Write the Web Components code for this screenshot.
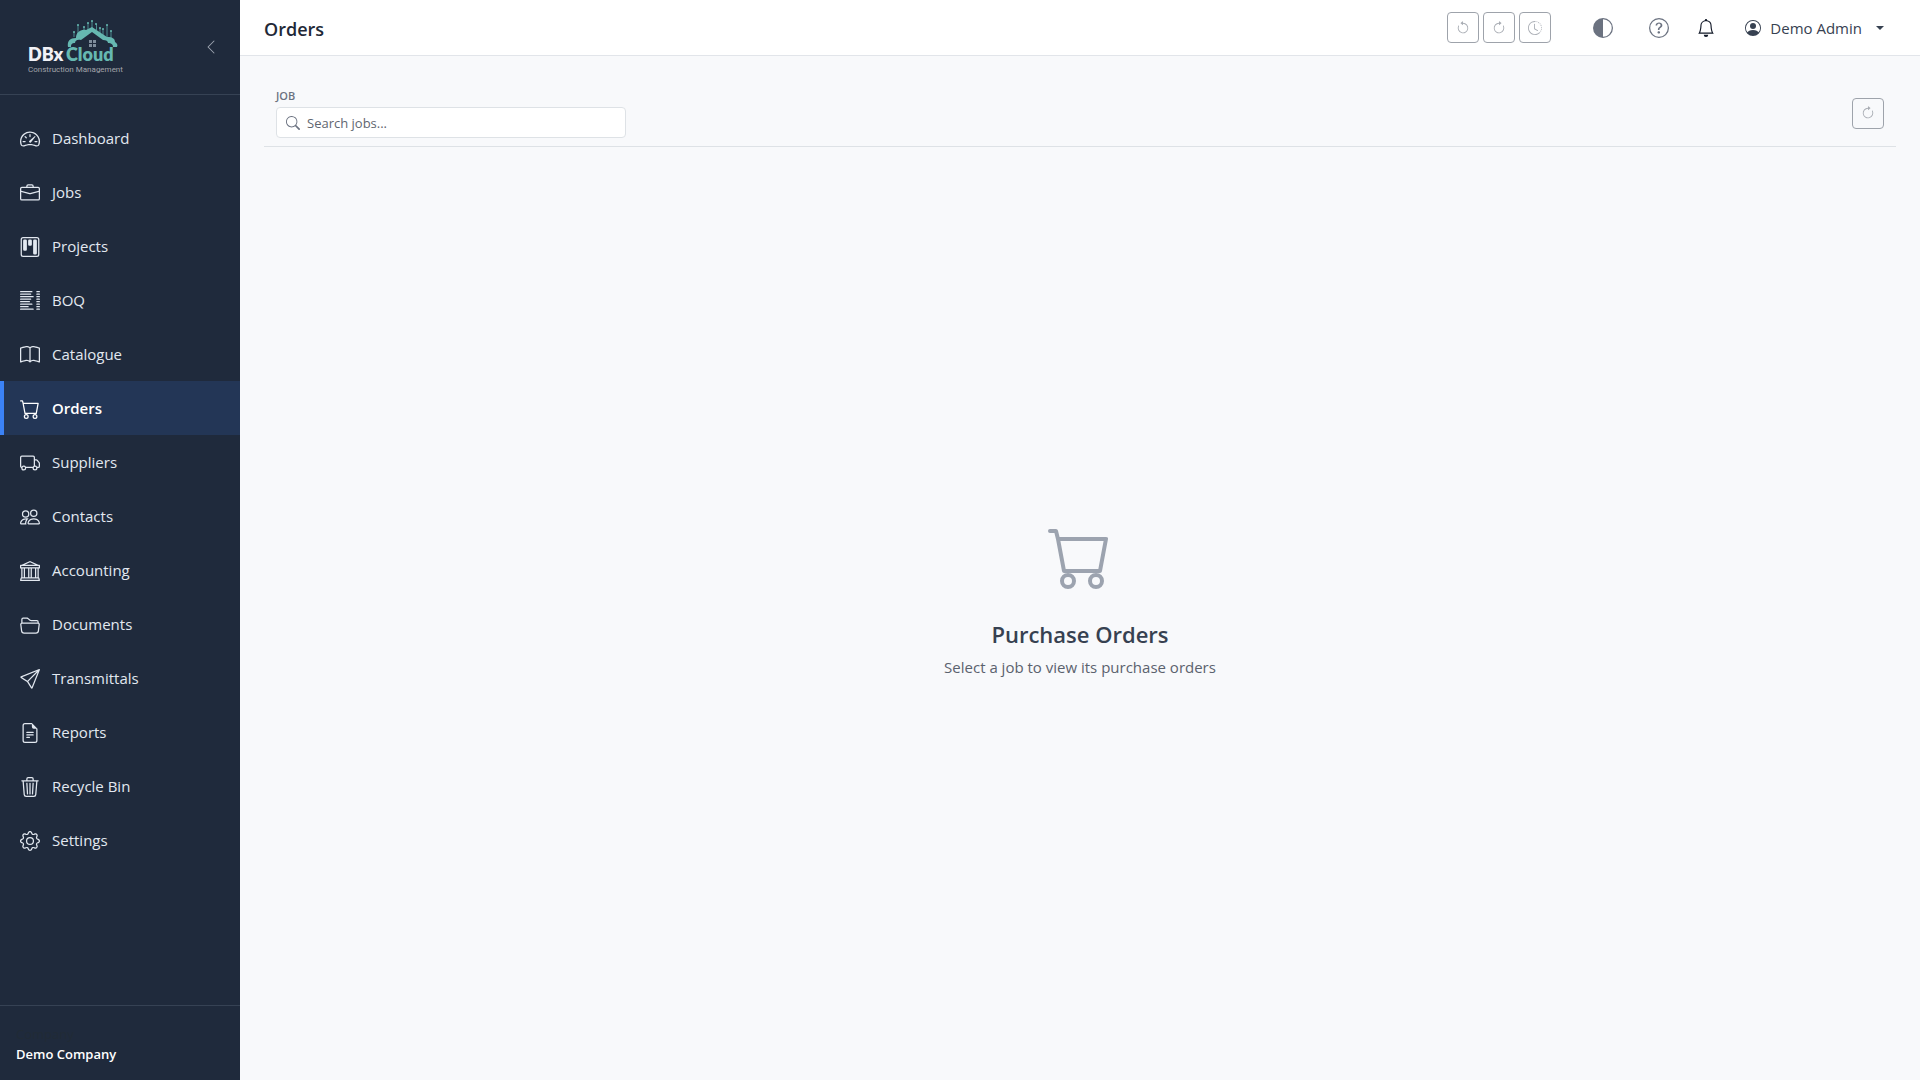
<!DOCTYPE html>
<html lang="en">
<head>
<meta charset="utf-8">
<title>Orders</title>
<style>
  :root {
    --sidebar: #1f2a3c;
    --sidebar-line: #364254;
    --accent: #3b82f6;
    --page: #f8f9fb;
    --line: #dee2e6;
    --muted: #6b7280;
    --text: #374151;
  }
  body {
    margin: 0;
    font: 15px/24px "Open Sans", "Noto Sans", sans-serif;
    color: var(--text);
    background: var(--page);
  }
</style>
</head>
<body>
<app-shell>
  <side-bar slot="sidebar" company="Demo Company">
    <nav-item icon="speedometer">Dashboard</nav-item>
    <nav-item icon="briefcase">Jobs</nav-item>
    <nav-item icon="kanban">Projects</nav-item>
    <nav-item icon="columns">BOQ</nav-item>
    <nav-item icon="book">Catalogue</nav-item>
    <nav-item icon="cart" active>Orders</nav-item>
    <nav-item icon="truck">Suppliers</nav-item>
    <nav-item icon="people">Contacts</nav-item>
    <nav-item icon="bank">Accounting</nav-item>
    <nav-item icon="folder">Documents</nav-item>
    <nav-item icon="send">Transmittals</nav-item>
    <nav-item icon="file">Reports</nav-item>
    <nav-item icon="trash">Recycle Bin</nav-item>
    <nav-item icon="gear">Settings</nav-item>
  </side-bar>
  <top-bar slot="header" user="Demo Admin">Orders</top-bar>
  <job-filter></job-filter>
  <empty-state icon="cart">
    <span slot="title">Purchase Orders</span>
    Select a job to view its purchase orders
  </empty-state>
</app-shell>

<script>
const icons = {
  speedometer: `<path d="M8 4a.5.5 0 0 1 .5.5V6a.5.5 0 0 1-1 0V4.5A.5.5 0 0 1 8 4M3.732 5.732a.5.5 0 0 1 .707 0l.915.914a.5.5 0 1 1-.708.708l-.914-.915a.5.5 0 0 1 0-.707M2 10a.5.5 0 0 1 .5-.5h1.586a.5.5 0 0 1 0 1H2.5A.5.5 0 0 1 2 10m9.5 0a.5.5 0 0 1 .5-.5h1.5a.5.5 0 0 1 0 1H12a.5.5 0 0 1-.5-.5m.754-4.246a.39.39 0 0 0-.527-.02L7.547 9.31a.91.91 0 1 0 1.302 1.258l3.434-4.297a.39.39 0 0 0-.029-.518z"/><path fill-rule="evenodd" d="M0 10a8 8 0 1 1 15.547 2.661c-.442 1.253-1.845 1.602-2.932 1.25C11.309 13.488 9.475 13 8 13c-1.474 0-3.31.488-4.615.911-1.087.352-2.49.003-2.932-1.25A8 8 0 0 1 0 10m8-7a7 7 0 0 0-6.603 9.329c.203.575.923.876 1.68.63C4.397 12.533 6.358 12 8 12s3.604.532 4.923.96c.757.245 1.477-.056 1.68-.631A7 7 0 0 0 8 3"/>`,
  briefcase: `<path d="M6.5 1A1.5 1.5 0 0 0 5 2.5V3H1.5A1.5 1.5 0 0 0 0 4.5v8A1.5 1.5 0 0 0 1.5 14h13a1.5 1.5 0 0 0 1.5-1.5v-8A1.5 1.5 0 0 0 14.5 3H11v-.5A1.5 1.5 0 0 0 9.5 1zm0 1h3a.5.5 0 0 1 .5.5V3H6v-.5a.5.5 0 0 1 .5-.5m1.886 6.914L15 7.151V12.5a.5.5 0 0 1-.5.5h-13a.5.5 0 0 1-.5-.5V7.15l6.614 1.764a1.5 1.5 0 0 0 .772 0M1.5 4h13a.5.5 0 0 1 .5.5v1.616L8.129 7.948a.5.5 0 0 1-.258 0L1 6.116V4.5a.5.5 0 0 1 .5-.5"/>`,
  kanban: `<path d="M13.5 1a1 1 0 0 1 1 1v12a1 1 0 0 1-1 1h-11a1 1 0 0 1-1-1V2a1 1 0 0 1 1-1zm-11-1a2 2 0 0 0-2 2v12a2 2 0 0 0 2 2h11a2 2 0 0 0 2-2V2a2 2 0 0 0-2-2z"/><path d="M6.5 3a1 1 0 0 1 1-1h1a1 1 0 0 1 1 1v3a1 1 0 0 1-1 1h-1a1 1 0 0 1-1-1zm-4 0a1 1 0 0 1 1-1h1a1 1 0 0 1 1 1v7a1 1 0 0 1-1 1h-1a1 1 0 0 1-1-1zm8 0a1 1 0 0 1 1-1h1a1 1 0 0 1 1 1v10a1 1 0 0 1-1 1h-1a1 1 0 0 1-1-1z"/>`,
  columns: `<path fill="none" stroke="currentColor" stroke-linecap="round" d="M.5.5h9M.5 2.5h8M.5 4.5h10M.5 6.5h8M.5 8.5h7M.5 10.5h9M.5 12.5h6M.5 14.5h10M13.5.5h2M13.5 2.5h2M13.5 4.5h2M13.5 6.5h2M13.5 8.5h2M13.5 10.5h2M13.5 12.5h2M13.5 14.5h2"/>`,
  book: `<path d="M1 2.828c.885-.37 2.154-.769 3.388-.893 1.33-.134 2.458.063 3.112.752v9.746c-.935-.53-2.12-.603-3.213-.493-1.18.12-2.37.461-3.287.811zm7.5-.141c.654-.689 1.782-.886 3.112-.752 1.234.124 2.503.523 3.388.893v9.923c-.918-.35-2.107-.692-3.287-.81-1.094-.111-2.278-.039-3.213.492zM8 1.783C7.015.936 5.587.81 4.287.94c-1.514.153-3.042.672-3.994 1.105A.5.5 0 0 0 0 2.5v11a.5.5 0 0 0 .707.455c.882-.4 2.303-.881 3.68-1.02 1.409-.142 2.59.087 3.223.877a.5.5 0 0 0 .78 0c.633-.79 1.814-1.019 3.222-.877 1.378.139 2.8.62 3.681 1.02A.5.5 0 0 0 16 13.5v-11a.5.5 0 0 0-.293-.455c-.952-.433-2.48-.952-3.994-1.105C10.413.809 8.985.936 8 1.783"/>`,
  cart: `<path d="M0 1.5A.5.5 0 0 1 .5 1H2a.5.5 0 0 1 .485.379L2.89 3H14.5a.5.5 0 0 1 .491.592l-1.5 8A.5.5 0 0 1 13 12H4a.5.5 0 0 1-.491-.408L2.01 3.607 1.61 2H.5a.5.5 0 0 1-.5-.5M3.102 4l1.313 7h8.17l1.313-7zM5 12a2 2 0 1 0 0 4 2 2 0 0 0 0-4m7 0a2 2 0 1 0 0 4 2 2 0 0 0 0-4m-7 1a1 1 0 1 1 0 2 1 1 0 0 1 0-2m7 0a1 1 0 1 1 0 2 1 1 0 0 1 0-2"/>`,
  truck: `<path d="M0 3.5A1.5 1.5 0 0 1 1.5 2h9A1.5 1.5 0 0 1 12 3.5V5h1.02a1.5 1.5 0 0 1 1.17.563l1.481 1.85a1.5 1.5 0 0 1 .329.938V10.5a1.5 1.5 0 0 1-1.5 1.5H14a2 2 0 1 1-4 0H5a2 2 0 1 1-3.998-.085A1.5 1.5 0 0 1 0 10.5zm1.294 7.456A2 2 0 0 1 4.732 11h5.536a2 2 0 0 1 .732-.732V3.5a.5.5 0 0 0-.5-.5h-9a.5.5 0 0 0-.5.5v7a.5.5 0 0 0 .294.456M12 10a2 2 0 0 1 1.732 1h.768a.5.5 0 0 0 .5-.5V8.35a.5.5 0 0 0-.11-.312l-1.48-1.85A.5.5 0 0 0 13.02 6H12zm-9 1a1 1 0 1 0 0 2 1 1 0 0 0 0-2m9 0a1 1 0 1 0 0 2 1 1 0 0 0 0-2"/>`,
  people: `<path d="M15 14s1 0 1-1-1-4-5-4-5 3-5 4 1 1 1 1zm-7.978-1L7 12.996c.001-.264.167-1.03.76-1.72C8.312 10.629 9.282 10 11 10c1.717 0 2.687.63 3.24 1.276.593.69.758 1.457.76 1.72l-.008.002-.014.002zM11 7a2 2 0 1 0 0-4 2 2 0 0 0 0 4m3-2a3 3 0 1 1-6 0 3 3 0 0 1 6 0M6.936 9.28a6 6 0 0 0-1.23-.247A7 7 0 0 0 5 9c-4 0-5 3-5 4q0 1 1 1h4.216A2.24 2.24 0 0 1 5 13c0-1.01.377-2.042 1.09-2.904.243-.294.526-.569.846-.816M4.92 10A5.5 5.5 0 0 0 4 13H1c0-.26.164-1.03.76-1.724.545-.636 1.492-1.256 3.16-1.275ZM1.5 5.5a3 3 0 1 1 6 0 3 3 0 0 1-6 0m3-2a2 2 0 1 0 0 4 2 2 0 0 0 0-4"/>`,
  bank: `<path d="m8 0 6.61 3h.89a.5.5 0 0 1 .5.5v2a.5.5 0 0 1-.5.5H15v7a.5.5 0 0 1 .485.38l.5 2a.498.498 0 0 1-.485.62H.5a.498.498 0 0 1-.485-.62l.5-2A.5.5 0 0 1 1 13V6H.5a.5.5 0 0 1-.5-.5v-2A.5.5 0 0 1 .5 3h.89zM3.777 3h8.447L8 1zM2 6v7h1V6zm2 0v7h2.5V6zm3.5 0v7h1V6zm2 0v7H12V6zM13 6v7h1V6zm2-1V4H1v1zm-.39 9H1.39l-.25 1h13.72z"/>`,
  folder: `<path d="M1 3.5A1.5 1.5 0 0 1 2.5 2h2.764c.958 0 1.76.56 2.311 1.184C7.985 3.648 8.48 4 9 4h4.5A1.5 1.5 0 0 1 15 5.5v.64c.57.265.94.876.856 1.546l-.64 5.124A2.5 2.5 0 0 1 12.733 15H3.266a2.5 2.5 0 0 1-2.481-2.19l-.64-5.124A1.5 1.5 0 0 1 1 6.14zM2 6h12v-.5a.5.5 0 0 0-.5-.5H9c-.964 0-1.71-.629-2.174-1.154C6.374 3.334 5.82 3 5.264 3H2.5a.5.5 0 0 0-.5.5zm-.367 1a.5.5 0 0 0-.496.562l.64 5.124A1.5 1.5 0 0 0 3.266 14h9.468a1.5 1.5 0 0 0 1.489-1.314l.64-5.124A.5.5 0 0 0 14.367 7z"/>`,
  send: `<path d="M15.854.146a.5.5 0 0 1 .11.54l-5.819 14.547a.75.75 0 0 1-1.329.124l-3.178-4.995L.643 7.184a.75.75 0 0 1 .124-1.33L15.314.037a.5.5 0 0 1 .54.11ZM6.636 10.07l2.761 4.338L14.13 2.576zm6.787-8.201L1.591 6.602l4.339 2.76z"/>`,
  file: `<path d="M5.5 7a.5.5 0 0 0 0 1h5a.5.5 0 0 0 0-1zM5 9.5a.5.5 0 0 1 .5-.5h5a.5.5 0 0 1 0 1h-5a.5.5 0 0 1-.5-.5m0 2a.5.5 0 0 1 .5-.5h2a.5.5 0 0 1 0 1h-2a.5.5 0 0 1-.5-.5"/><path d="M9.5 0H4a2 2 0 0 0-2 2v12a2 2 0 0 0 2 2h8a2 2 0 0 0 2-2V4.5zm0 1v2A1.5 1.5 0 0 0 11 4.5h2V14a1 1 0 0 1-1 1H4a1 1 0 0 1-1-1V2a1 1 0 0 1 1-1z"/>`,
  trash: `<path d="M6.5 1h3a.5.5 0 0 1 .5.5v1H6v-1a.5.5 0 0 1 .5-.5M11 2.5v-1A1.5 1.5 0 0 0 9.5 0h-3A1.5 1.5 0 0 0 5 1.5v1H1.5a.5.5 0 0 0 0 1h.538l.853 10.66A2 2 0 0 0 4.885 16h6.23a2 2 0 0 0 1.994-1.84l.853-10.66h.538a.5.5 0 0 0 0-1zm1.958 1-.846 10.58a1 1 0 0 1-.997.92h-6.23a1 1 0 0 1-.997-.92L3.042 3.5zm-7.487 1a.5.5 0 0 1 .528.47l.5 8.5a.5.5 0 0 1-.998.06L5 5.03a.5.5 0 0 1 .47-.53Zm5.058 0a.5.5 0 0 1 .47.53l-.5 8.5a.5.5 0 1 1-.998-.06l.5-8.5a.5.5 0 0 1 .528-.47M8 4.5a.5.5 0 0 1 .5.5v8.5a.5.5 0 0 1-1 0V5a.5.5 0 0 1 .5-.5"/>`,
  gear: `<path d="M8 4.754a3.246 3.246 0 1 0 0 6.492 3.246 3.246 0 0 0 0-6.492M5.754 8a2.246 2.246 0 1 1 4.492 0 2.246 2.246 0 0 1-4.492 0"/><path d="M9.796 1.343c-.527-1.79-3.065-1.79-3.592 0l-.094.319a.873.873 0 0 1-1.255.52l-.292-.16c-1.64-.892-3.433.902-2.54 2.541l.159.292a.873.873 0 0 1-.52 1.255l-.319.094c-1.79.527-1.79 3.065 0 3.592l.319.094a.873.873 0 0 1 .52 1.255l-.16.292c-.892 1.64.901 3.434 2.541 2.54l.292-.159a.873.873 0 0 1 1.255.52l.094.319c.527 1.79 3.065 1.79 3.592 0l.094-.319a.873.873 0 0 1 1.255-.52l.292.16c1.64.893 3.434-.902 2.54-2.541l-.159-.292a.873.873 0 0 1 .52-1.255l.319-.094c1.79-.527 1.79-3.065 0-3.592l-.319-.094a.873.873 0 0 1-.52-1.255l.16-.292c.893-1.64-.902-3.433-2.541-2.54l-.292.159a.873.873 0 0 1-1.255-.52zm-2.633.283c.246-.835 1.428-.835 1.674 0l.094.319a1.873 1.873 0 0 0 2.693 1.115l.291-.16c.764-.415 1.6.42 1.184 1.185l-.159.292a1.873 1.873 0 0 0 1.116 2.692l.318.094c.835.246.835 1.428 0 1.674l-.319.094a1.873 1.873 0 0 0-1.115 2.693l.16.291c.415.764-.42 1.6-1.185 1.184l-.291-.159a1.873 1.873 0 0 0-2.693 1.116l-.094.318c-.246.835-1.428.835-1.674 0l-.094-.319a1.873 1.873 0 0 0-2.692-1.115l-.292.16c-.764.415-1.6-.42-1.184-1.185l.159-.291A1.873 1.873 0 0 0 1.945 8.93l-.319-.094c-.835-.246-.835-1.428 0-1.674l.319-.094A1.873 1.873 0 0 0 3.06 4.377l-.16-.292c-.415-.764.42-1.6 1.185-1.184l.292.159a1.873 1.873 0 0 0 2.692-1.115z"/>`,
  undo: `<path fill-rule="evenodd" d="M8 3a5 5 0 1 1-4.546 2.914.5.5 0 0 0-.908-.417A6 6 0 1 0 8 2z"/><path d="M8 4.466V.534a.25.25 0 0 0-.41-.192L5.23 2.308a.25.25 0 0 0 0 .384l2.36 1.966A.25.25 0 0 0 8 4.466"/>`,
  redo: `<path fill-rule="evenodd" d="M8 3a5 5 0 1 0 4.546 2.914.5.5 0 0 1 .908-.417A6 6 0 1 1 8 2z"/><path d="M8 4.466V.534a.25.25 0 0 1 .41-.192l2.36 1.966c.12.1.12.284 0 .384L8.41 4.658A.25.25 0 0 1 8 4.466"/>`,
  history: `<path d="M8.515 1.019A7 7 0 0 0 8 1V0a8 8 0 0 1 .589.022zm2.004.45a7 7 0 0 0-.985-.299l.219-.976q.576.129 1.126.342zm1.37.71a7 7 0 0 0-.439-.27l.493-.87a8 8 0 0 1 .979.654l-.615.789a7 7 0 0 0-.418-.302zm1.834 1.79a7 7 0 0 0-.653-.796l.724-.69q.406.429.747.91zm.744 1.352a7 7 0 0 0-.214-.468l.893-.45a8 8 0 0 1 .45 1.088l-.95.313a7 7 0 0 0-.179-.483m.53 2.507a7 7 0 0 0-.1-1.025l.985-.17q.1.58.116 1.17zm-.131 1.538q.05-.254.081-.51l.993.123a8 8 0 0 1-.23 1.155l-.964-.267q.069-.247.12-.501m-.952 2.379q.276-.436.486-.908l.914.405q-.24.54-.555 1.038zm-.964 1.205q.183-.183.35-.378l.758.653a8 8 0 0 1-.401.432z"/><path d="M8 1a7 7 0 1 0 4.95 11.95l.707.707A8.001 8.001 0 1 1 8 0z"/><path d="M7.5 3a.5.5 0 0 1 .5.5v5.21l3.248 1.856a.5.5 0 0 1-.496.868l-3.5-2A.5.5 0 0 1 7 9V3.5a.5.5 0 0 1 .5-.5"/>`,
  half: `<path d="M8 15A7 7 0 1 0 8 1zm0 1A8 8 0 1 1 8 0a8 8 0 0 1 0 16"/>`,
  question: `<path d="M8 15A7 7 0 1 1 8 1a7 7 0 0 1 0 14m0 1A8 8 0 1 0 8 0a8 8 0 0 0 0 16"/><path d="M5.255 5.786a.237.237 0 0 0 .241.247h.825c.138 0 .248-.113.266-.25.09-.656.54-1.134 1.342-1.134.686 0 1.314.343 1.314 1.168 0 .635-.374.927-.965 1.371-.673.489-1.206 1.06-1.168 1.987l.003.217a.25.25 0 0 0 .25.246h.811a.25.25 0 0 0 .25-.25v-.105c0-.718.273-.927 1.01-1.486.609-.463 1.244-.977 1.244-2.056 0-1.511-1.276-2.241-2.673-2.241-1.267 0-2.655.59-2.75 2.286m1.557 5.763c0 .533.425.927 1.01.927.609 0 1.028-.394 1.028-.927 0-.552-.42-.94-1.029-.94-.584 0-1.009.388-1.009.94"/>`,
  bell: `<path d="M8 16a2 2 0 0 0 2-2H6a2 2 0 0 0 2 2M8 1.918l-.797.161A4 4 0 0 0 4 6c0 .628-.134 2.197-.459 3.742-.16.767-.376 1.566-.663 2.258h10.244c-.287-.692-.502-1.49-.663-2.258C12.134 8.197 12 6.628 12 6a4 4 0 0 0-3.203-3.92zM14.22 12c.223.447.481.801.78 1H1c.299-.199.557-.553.78-1C2.68 10.2 3 6.88 3 6c0-2.42 1.72-4.44 4.005-4.901a1 1 0 1 1 1.99 0A5 5 0 0 1 13 6c0 .88.32 4.2 1.22 6"/>`,
  person: `<path d="M11 6a3 3 0 1 1-6 0 3 3 0 0 1 6 0"/><path fill-rule="evenodd" d="M0 8a8 8 0 1 1 16 0A8 8 0 0 1 0 8m8-7a7 7 0 0 0-5.468 11.37C3.242 11.226 4.805 10 8 10s4.757 1.225 5.468 2.37A7 7 0 0 0 8 1"/>`,
  search: `<path d="M11.742 10.344a6.5 6.5 0 1 0-1.397 1.398h-.001q.044.06.098.115l3.85 3.85a1 1 0 0 0 1.415-1.414l-3.85-3.85a1 1 0 0 0-.115-.1zM12 6.5a5.5 5.5 0 1 1-11 0 5.5 5.5 0 0 1 11 0"/>`,
  chevron: `<path fill-rule="evenodd" d="M11.354 1.646a.5.5 0 0 1 0 .708L5.707 8l5.647 5.646a.5.5 0 0 1-.708.708l-6-6a.5.5 0 0 1 0-.708l6-6a.5.5 0 0 1 .708 0"/>`,
};

// fills a new open shadow root from a template
function render(el, html) {
  const template = document.createElement("template");
  template.innerHTML = html;
  el.attachShadow({ mode: "open" });
  el.shadowRoot.appendChild(template.content.cloneNode(true));
}

class BiIcon extends HTMLElement {
  connectedCallback() {
    if (this.shadowRoot) return;
    render(this, `
      <style>
        :host { display: inline-flex; flex: none; width: var(--icon, 16px); height: var(--icon, 16px); }
        svg { width: 100%; height: 100%; overflow: visible; }
      </style>
      <svg viewBox="0 0 16 16" fill="currentColor" aria-hidden="true">${icons[this.getAttribute("name")]}</svg>
    `);
  }
}
customElements.define("bi-icon", BiIcon);

class AppShell extends HTMLElement {
  constructor() {
    super();
    render(this, `
      <style>
        :host { display: grid; grid-template-columns: 240px 1fr; min-height: 100vh; }
        .content { display: flex; flex-direction: column; min-width: 0; }
        main { flex: 1; display: flex; flex-direction: column; padding: 24px; }
      </style>
      <slot name="sidebar"></slot>
      <div class="content">
        <slot name="header"></slot>
        <main><slot></slot></main>
      </div>
    `);
  }
}
customElements.define("app-shell", AppShell);

class BrandLogo extends HTMLElement {
  constructor() {
    super();
    render(this, `
      <style>
        :host { display: block; width: 120px; height: 62px; }
        text { font-family: Lato, sans-serif; }
        .name { font-size: 18px; font-weight: 800; }
        .tag { font: 8px Roboto, sans-serif; fill: #a3a5ab; }
      </style>
      <svg width="120" height="62" viewBox="16 16 120 62" role="img" aria-label="DBx Cloud">
        <g stroke="#4d8c90" fill="none">
          <path d="M74 37v-5M78 34v-9M84 33v-6M88 30v-7M92 29v-8M96.500 30v-6M100 33v-5M103 35v-6M107 37V25M111 38v-7"/>
        </g>
        <g fill="#66b8b1">
          <circle cx="74" cy="32" r="1"/><circle cx="78" cy="25" r="1"/><circle cx="84" cy="27" r="1"/>
          <circle cx="88" cy="23" r="1"/><circle cx="92" cy="21" r="1"/><circle cx="96" cy="24" r="1"/>
          <circle cx="100" cy="28" r="1"/><circle cx="103" cy="29" r="1"/><circle cx="107" cy="25" r="1"/>
          <circle cx="111" cy="31" r="1"/>
          <path d="M68 47c-1-6 2-9 8-9 0-5 4-9 10-8l6-3 15 10c6 0 8 2 8 5 2 1 3 3 2 5h-4c0-3-2-4-5-4 0-2-2-3-5-3l-11-8-11 8c-4-1-6 1-6 3-3 0-4 1-4 4z"/>
        </g>
        <path fill="#7f8c9b" d="M89 40h3v3h-3zM93 40h3v3h-3zM89 44h3v3h-3zM93 44h3v3h-3z"/>
        <text class="name" x="28" y="61" fill="#f1f1f6">DBx</text>
        <text class="name" x="66" y="61" fill="#66b8b1">Cloud</text>
        <text class="tag" x="28" y="72">Construction Management</text>
      </svg>
    `);
  }
}
customElements.define("brand-logo", BrandLogo);

class SideBar extends HTMLElement {
  constructor() {
    super();
    render(this, `
      <style>
        :host { display: flex; flex-direction: column; background: var(--sidebar); color: #e2e8f0; }
        header { display: flex; align-items: center; justify-content: space-between; padding: 16px; border-bottom: 1px solid var(--sidebar-line); }
        button { display: flex; padding: 5px; border: 0; background: none; color: #9ca3af; }
        nav { flex: 1; padding: 16px 0; }
        footer { padding: 16px; border-top: 1px solid var(--sidebar-line); font-size: 13px; line-height: 20px; }
        small { display: block; font-size: 13px; padding-top: 2px; color: #212b36; }
        strong { display: block; font-weight: 600; color: #fff; }
      </style>
      <header>
        <brand-logo></brand-logo>
        <button aria-label="Collapse sidebar"><bi-icon name="chevron"></bi-icon></button>
      </header>
      <nav><slot></slot></nav>
      <footer><small>Company</small><strong>${this.getAttribute("company")}</strong></footer>
    `);
  }
}
customElements.define("side-bar", SideBar);

class NavItem extends HTMLElement {
  constructor() {
    super();
    render(this, `
      <style>
        :host { display: block; }
        a { --icon: 20px; display: flex; align-items: center; gap: 12px; padding: 15px 16px; border-left: 4px solid transparent; color: inherit; text-decoration: none; }
        bi-icon { margin-top: 2px; }
        :host([active]) a { color: #fff; font-weight: 600; background: #233656; border-color: var(--accent); }
      </style>
      <a href="#"><bi-icon name="${this.getAttribute("icon")}"></bi-icon><slot></slot></a>
    `);
  }
}
customElements.define("nav-item", NavItem);

class ToolButton extends HTMLElement {
  constructor() {
    super();
    render(this, `
      <style>
        :host { display: block; }
        button { --icon: 14px; display: flex; align-items: center; justify-content: center; width: 32px; height: 31px; padding: 0; border: 1px solid #9ea3ab; border-radius: 4px; background: none; color: #a9adb4; }
      </style>
      <button disabled aria-label="${this.getAttribute("label")}"><bi-icon name="${this.getAttribute("icon")}"></bi-icon></button>
    `);
  }
}
customElements.define("tool-button", ToolButton);

class TopBar extends HTMLElement {
  constructor() {
    super();
    render(this, `
      <style>
        :host { display: flex; align-items: center; justify-content: space-between; height: 55px; padding: 0 24px; background: #fff; border-bottom: 1px solid #e2e5ea; }
        h1 { margin: 0; padding-top: 2px; font-size: 18px; line-height: 28px; font-weight: 600; color: #1f2937; }
        .tools, .group, .user { display: flex; align-items: center; }
        .group { gap: 4px; margin-right: 30px; }
        button { --icon: 20px; display: flex; border: 0; background: none; padding: 0 12px; color: var(--muted); font: inherit; }
        .help { margin-left: 12px; }
        .bell { --icon: 18px; color: #111827; padding: 0 16px; }
        .user { --icon: 16px; gap: 9px; color: var(--text); padding: 0 12px 0 14px; }
        .caret { margin-left: 5px; border: 4px solid transparent; border-top-color: currentColor; border-bottom: 0; }
      </style>
      <h1><slot></slot></h1>
      <div class="tools">
        <div class="group">
          <tool-button icon="undo" label="Undo"></tool-button>
          <tool-button icon="redo" label="Redo"></tool-button>
          <tool-button icon="history" label="History"></tool-button>
        </div>
        <button aria-label="Theme"><bi-icon name="half"></bi-icon></button>
        <button class="help" aria-label="Help"><bi-icon name="question"></bi-icon></button>
        <button class="bell" aria-label="Notifications"><bi-icon name="bell"></bi-icon></button>
        <button class="user"><bi-icon name="person"></bi-icon>${this.getAttribute("user")}<span class="caret"></span></button>
      </div>
    `);
  }
}
customElements.define("top-bar", TopBar);

class JobFilter extends HTMLElement {
  constructor() {
    super();
    render(this, `
      <style>
        :host { display: flex; align-items: center; justify-content: space-between; padding: 8px 12px; border-bottom: 1px solid var(--line); }
        label { display: block; font-size: 11px; line-height: 16px; font-weight: 600; color: var(--muted); margin-bottom: 3px; }
        .field { --icon: 14px; display: flex; align-items: center; gap: 7px; box-sizing: border-box; width: 350px; height: 31px; padding: 0 9px; border: 1px solid var(--line); border-radius: 4px; background: #fff; color: var(--muted); }
        input { flex: 1; min-width: 0; border: 0; padding: 0; outline: 0; background: none; font: inherit; font-size: 13px; color: var(--text); }
        input::placeholder { color: #5f6670; opacity: 1; }
      </style>
      <div>
        <label for="job">JOB</label>
        <div class="field"><bi-icon name="search"></bi-icon><input id="job" type="text" placeholder="Search jobs..."></div>
      </div>
      <tool-button icon="redo" label="Refresh"></tool-button>
    `);
  }
}
customElements.define("job-filter", JobFilter);

class EmptyState extends HTMLElement {
  constructor() {
    super();
    render(this, `
      <style>
        :host { flex: 1; display: flex; flex-direction: column; align-items: center; justify-content: center; color: #5b626e; }
        bi-icon { --icon: 64px; color: #9ca3af; margin-bottom: 30px; }
        h2 { margin: 0 0 6px; font-size: 22px; line-height: 30px; font-weight: 600; color: var(--text); }
        p { margin: 0; }
      </style>
      <bi-icon name="${this.getAttribute("icon")}"></bi-icon>
      <h2><slot name="title"></slot></h2>
      <p><slot></slot></p>
    `);
  }
}
customElements.define("empty-state", EmptyState);
</script>
</body>
</html>
